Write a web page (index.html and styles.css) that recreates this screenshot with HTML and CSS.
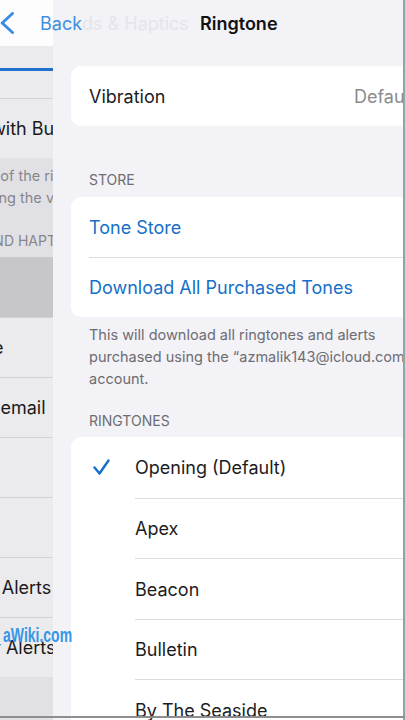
FILE: index.html
```html
<!DOCTYPE html>
<html lang="en">
<head>
<meta charset="utf-8">
<title>Ringtone</title>
<link rel="stylesheet" href="styles.css">
</head>
<body>
<div class="screen">
  <div class="back-page">
    <div class="back-inner">
      <div class="back-nav"></div>
      <div class="b-card">
        <div class="b-row slider-row"><div class="slider-track"></div></div>
        <div class="b-row">Change with Buttons</div>
      </div>
      <div class="b-footer">The volume of the ringer and alerts can be<br>adjusted using the volume buttons.</div>
      <div class="b-header">Sounds and Haptic Patterns</div>
      <div class="b-card">
        <div class="b-row selected">Ringtone</div>
        <div class="b-row">Text Tone</div>
        <div class="b-row">New Voicemail</div>
        <div class="b-row">New Mail</div>
        <div class="b-row">Sent Mail</div>
        <div class="b-row">Calendar Alerts</div>
        <div class="b-row">Reminder Alerts</div>
      </div>
    </div>
  </div>

  <div class="front-page">
    <div class="f-content">
      <div class="card">
        <div class="row">
          <div class="row-body">
            <span class="vib-label">Vibration</span>
            <span class="value">Default</span>
          </div>
        </div>
      </div>

      <div class="f-header">Store</div>
      <div class="card">
        <div class="row">
          <div class="row-body link">Tone Store</div>
        </div>
        <div class="row">
          <div class="row-body link sep">Download All Purchased Tones</div>
        </div>
      </div>
      <div class="f-footer">This will download all ringtones and alerts<br>purchased using the “azmalik143@icloud.com”<br>account.</div>

      <div class="f-header tones-header">Ringtones</div>
      <div class="card">
        <div class="tone-row">
          <div class="check">
            <svg width="17" height="17" viewBox="0 0 17 17"><path d="M1.5 8.5 L6.5 14.5 L15.5 1.5" fill="none" stroke="#1470c8" stroke-width="2.4" stroke-linecap="round" stroke-linejoin="round"/></svg>
          </div>
          <div class="tone-body">Opening (Default)</div>
        </div>
        <div class="tone-row">
          <div class="check"></div>
          <div class="tone-body sep">Apex</div>
        </div>
        <div class="tone-row">
          <div class="check"></div>
          <div class="tone-body sep">Beacon</div>
        </div>
        <div class="tone-row">
          <div class="check"></div>
          <div class="tone-body sep">Bulletin</div>
        </div>
        <div class="tone-row">
          <div class="check"></div>
          <div class="tone-body sep">By The Seaside</div>
        </div>
      </div>
    </div>
  </div>

  <div class="nav-overlay">
    <div class="nav-back-icon">
      <svg width="14" height="22" viewBox="0 0 14 22"><path d="M12.5 1.5 L2.2 11 L12.5 20.5" fill="none" stroke="#3b8de2" stroke-width="3" stroke-linecap="round" stroke-linejoin="round"/></svg>
    </div>
    <div class="nav-back-text"><span class="back-label">Back</span><span class="fading-title">ds &amp; Haptics</span></div>
    <div class="nav-title">Ringtone</div>
  </div>

  <div class="watermark">aWiki.com</div>
  <div class="bottom-edge"></div>
</div>
</body>
</html>
```

FILE: styles.css
```css
* { box-sizing: border-box; }
html, body { margin: 0; padding: 0; background: #ffffff; }
body {
  font-family: Inter, "Noto Sans", "Liberation Sans", sans-serif;
  color: #1c1c1e;
}
.screen {
  position: relative;
  width: 405px;
  height: 720px;
  overflow: hidden;
}

/* ---------- dimmed background page ---------- */
.back-page {
  height: 720px;
  background: #e1e1e5;
  overflow: hidden;
}
.back-inner {
  margin-left: -98px;
  width: 503px;
}
.back-nav {
  height: 46px;
  background: #fdfdfd;
}
.b-card {
  background: #ebebed;
}
.b-row {
  height: 60px;
  padding-left: 18px;
  display: flex;
  align-items: center;
  font-size: 18px;
  color: #1a1a1c;
  white-space: nowrap;
  border-top: 1px solid #d2d2d6;
}
.b-row:first-child { border-top: none; }
.slider-row {
  height: 52px;
  display: block;
  padding-left: 0;
  padding-top: 22px;
}
.slider-track {
  height: 3px;
  background: #1f6fd1;
}
.b-row.selected { background: #c6c6cb; }
.b-footer {
  padding: 7px 0 0 14px;
  font-size: 14.5px;
  line-height: 22px;
  color: #86868b;
  white-space: nowrap;
}
.b-header {
  margin-top: 23px;
  padding: 0 0 7px 18px;
  font-size: 14px;
  line-height: 18px;
  text-transform: uppercase;
  color: #86868b;
  white-space: nowrap;
}

/* ---------- sliding front page ---------- */
.front-page {
  position: absolute;
  top: 0;
  left: 53px;
  width: 352px;
  height: 720px;
  background: #f2f2f7;
  border-right: 2px solid #8aa7a9;
  overflow: hidden;
}
.f-content {
  padding-top: 66px;
}
.card {
  margin-left: 18px;
  margin-right: -20px;
  background: #ffffff;
  border-radius: 10px;
  overflow: hidden;
}
.row {
  padding-left: 18px;
}
.row-body {
  height: 60px;
  display: flex;
  align-items: center;
  font-size: 18px;
  white-space: nowrap;
}
.row-body.sep, .tone-body.sep { border-top: 1px solid #dcdce0; }
.vib-label { width: 265px; flex: none; }
.value { color: #8a8a8e; }
.link { color: #1470c8; }
.f-header {
  margin-top: 45px;
  padding: 0 0 8px 36px;
  font-size: 14px;
  line-height: 18px;
  text-transform: uppercase;
  color: #6d6d72;
}
.f-footer {
  padding: 7px 0 0 36px;
  font-size: 14.5px;
  line-height: 22px;
  color: #6d6d72;
  white-space: nowrap;
}
.tones-header {
  margin-top: 22px;
  padding-bottom: 7px;
}
.tone-row {
  display: flex;
  padding-left: 18px;
}
.check {
  width: 46px;
  flex: none;
  display: flex;
  align-items: center;
  padding-left: 4px;
  padding-top: 1px;
}
.check svg { display: block; }
.tone-body {
  flex: 1;
  height: 60.5px;
  display: flex;
  align-items: center;
  padding-top: 1px;
  font-size: 18px;
  white-space: nowrap;
}

/* ---------- shared navigation bar (overlay during transition) ---------- */
.nav-overlay {
  position: absolute;
  top: 0;
  left: 0;
  width: 405px;
  height: 46px;
  display: grid;
  grid-template-columns: 40px 160px auto;
  align-items: center;
  font-size: 18px;
  white-space: nowrap;
}
.nav-back-icon {
  display: flex;
  align-items: center;
}
.nav-back-icon svg { display: block; }
.nav-back-text { display: flex; }
.back-label { color: #3e8fe0; }
.fading-title { color: #e5e5ea; }
.nav-title { font-weight: 600; color: #111113; }

.watermark {
  position: absolute;
  left: 3px;
  top: 625px;
  font-family: "Liberation Sans", Arial, sans-serif;
  font-weight: 700;
  font-size: 20px;
  line-height: 20px;
  color: #3896e6;
  transform: scaleX(0.7);
  transform-origin: left center;
  white-space: nowrap;
}
.bottom-edge {
  position: absolute;
  left: 0;
  top: 716px;
  width: 405px;
  height: 2px;
  background: #8e8e90;
}
```
